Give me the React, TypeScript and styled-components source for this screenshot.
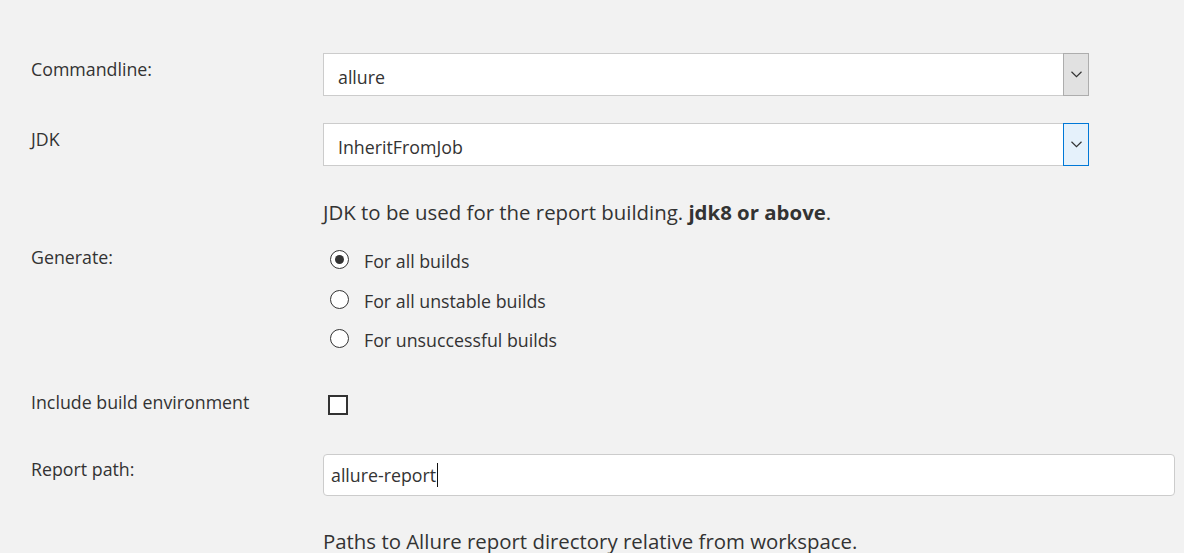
import React from 'react';
import styled, { createGlobalStyle } from 'styled-components';

const GlobalStyle = createGlobalStyle`
  html, body {
    margin: 0;
    padding: 0;
    background: #f2f2f2;
  }
  body {
    font-family: 'Open Sans', 'Noto Sans', sans-serif;
    color: #333;
  }
`;

const Page = styled.div`
  width: 1184px;
  height: 553px;
  overflow: hidden;
  padding: 53px 0 0 31px;
  box-sizing: border-box;
  display: flex;
  flex-direction: column;
`;

const Row = styled.div<{ $gap?: number }>`
  display: grid;
  grid-template-columns: 292px 1fr;
  align-items: start;
  margin-top: ${(p) => p.$gap ?? 0}px;
`;

const Label = styled.div<{ $pad?: number }>`
  font-size: 17.8px;
  line-height: 24px;
  color: #333;
  padding-top: ${(p) => Math.max(p.$pad ?? 0, 0)}px;
  margin-top: ${(p) => Math.min(p.$pad ?? 0, 0)}px;
`;

const SelectBox = styled.div`
  width: 766px;
  height: 43px;
  box-sizing: border-box;
  border: 1px solid #ccc;
  background: #fff;
  display: flex;
  align-items: stretch;
`;

const SelectValue = styled.div`
  flex: 1;
  display: flex;
  align-items: center;
  padding: 4px 0 0 14px;
  font-size: 17.8px;
  color: #333;
`;

const ArrowButton = styled.div<{ $active?: boolean }>`
  width: 26px;
  box-sizing: border-box;
  margin: -1px -1px -1px 0;
  border: 1px solid ${(p) => (p.$active ? '#0078d7' : '#adadad')};
  background: ${(p) => (p.$active ? '#e5f1fb' : '#e1e1e1')};
  display: flex;
  align-items: center;
  justify-content: center;
`;

const Help = styled.div<{ $gap: number }>`
  margin: ${(p) => p.$gap}px 0 0 292px;
  font-size: 20.4px;
  line-height: 28px;
  color: #333;
  white-space: nowrap;

  b {
    font-weight: 700;
  }
`;

const RadioGroup = styled.div`
  display: flex;
  flex-direction: column;
  padding-left: 7px;
`;

const RadioOption = styled.label`
  display: flex;
  align-items: flex-start;
  height: 39.5px;
  font-size: 17.8px;
  line-height: 24px;
  color: #333;
`;

const RadioCircle = styled.span<{ $checked?: boolean }>`
  width: 19px;
  height: 19px;
  box-sizing: border-box;
  border-radius: 50%;
  border: 1.5px solid #333;
  background: #fff;
  margin: 1px 15px 0 0;
  display: flex;
  align-items: center;
  justify-content: center;

  &::after {
    content: '';
    width: 9px;
    height: 9px;
    border-radius: 50%;
    background: #333;
    display: ${(p) => (p.$checked ? 'block' : 'none')};
  }
`;

const CheckBox = styled.span`
  display: block;
  width: 20px;
  height: 20px;
  box-sizing: border-box;
  border: 2px solid #333;
  background: #fff;
  margin: 5px 0 0 5px;
`;

const TextInput = styled.div`
  width: 852px;
  height: 42px;
  box-sizing: border-box;
  border: 1px solid #ccc;
  border-radius: 4px;
  background: #fff;
  padding: 1px 0 0 7px;
  display: flex;
  align-items: center;
  font-size: 17.8px;
  color: #333;
`;

const Caret = styled.span`
  display: inline-block;
  width: 1px;
  height: 24px;
  background: #111;
  margin-left: 1px;
`;

const Chevron = () => (
  <svg width="11" height="7" viewBox="0 0 11 7">
    <path d="M0.5 0.8 L5.5 5.6 L10.5 0.8" fill="none" stroke="#333" strokeWidth="1.2" />
  </svg>
);

const Select: React.FC<{ value: string; active?: boolean }> = ({ value, active }) => (
  <SelectBox>
    <SelectValue>{value}</SelectValue>
    <ArrowButton $active={active}>
      <Chevron />
    </ArrowButton>
  </SelectBox>
);

const options = [
  { text: 'For all builds', checked: true },
  { text: 'For all unstable builds', checked: false },
  { text: 'For unsuccessful builds', checked: false },
];

export default function App() {
  return (
    <>
      <GlobalStyle />
      <Page>
        <Row>
          <Label $pad={4}>Commandline:</Label>
          <Select value="allure" />
        </Row>
        <Row $gap={27}>
          <Label $pad={4}>JDK</Label>
          <Select value="InheritFromJob" active />
        </Row>
        <Help $gap={32}>
          JDK to be used for the report building. <b>jdk8 or above</b>.
        </Help>
        <Row $gap={23}>
          <Label $pad={-4}>Generate:</Label>
          <RadioGroup>
            {options.map((o) => (
              <RadioOption key={o.text}>
                <RadioCircle $checked={o.checked} />
                {o.text}
              </RadioOption>
            ))}
          </RadioGroup>
        </Row>
        <Row $gap={22}>
          <Label>Include build environment</Label>
          <CheckBox />
        </Row>
        <Row $gap={39}>
          <Label $pad={3}>Report path:</Label>
          <TextInput>
            allure-report
            <Caret />
          </TextInput>
        </Row>
        <Help $gap={31}>Paths to Allure report directory relative from workspace.</Help>
      </Page>
    </>
  );
}
